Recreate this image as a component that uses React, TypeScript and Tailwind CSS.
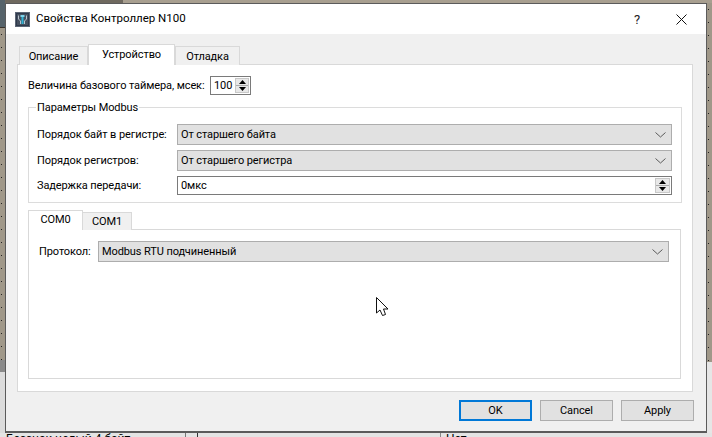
import React from "react";

const Chevron = () => (
  <svg width="11" height="6" viewBox="0 0 11 6" className="shrink-0">
    <path d="M0.5 0.5 L5.5 5 L10.5 0.5" fill="none" stroke="#5a5a5a" strokeWidth="1" />
  </svg>
);

const Combo = ({ text, className }: { text: string; className: string }) => (
  <div className={`h-[21px] flex items-center justify-between bg-[#e1e1e1] border border-[#adadad] pl-[3px] pr-[5px] ${className}`}>
    <span>{text}</span>
    <Chevron />
  </div>
);

const SpinButtons = ({ className }: { className: string }) => (
  <div className={`flex flex-col shrink-0 gap-px bg-[#ababab] border border-[#c8c8c8] ${className}`}>
    <div className="flex-1 bg-[#e8e8e8] flex items-center justify-center">
      <svg width="7" height="4" viewBox="0 0 7 4"><path d="M3.5 0 L7 4 L0 4 Z" fill="#000" /></svg>
    </div>
    <div className="flex-1 bg-[#e8e8e8] flex items-center justify-center">
      <svg width="7" height="4" viewBox="0 0 7 4"><path d="M0 0 L7 0 L3.5 4 Z" fill="#000" /></svg>
    </div>
  </div>
);

const AppIcon = () => (
  <svg width="15" height="15" viewBox="0 0 15 15" className="shrink-0">
    <rect x="0.5" y="0.5" width="14" height="14" fill="#2f3a4c" stroke="#5d6675" />
    <rect x="2" y="2" width="11" height="11" fill="#46505f" />
    <path d="M3.5 3.5 V7 L5.5 9 V12 M11.5 3.5 V7 L9.5 9 V12" fill="none" stroke="#b8c2cc" strokeWidth="1" />
    <rect x="6.5" y="3" width="2" height="9" fill="#2fb4d6" />
    <rect x="5.5" y="3" width="4" height="2" fill="#7fd3ea" />
  </svg>
);

const Button = ({ text, primary }: { text: string; primary?: boolean }) => (
  <div
    className={`w-[73px] h-[21px] flex items-center justify-center bg-[#e1e1e1] ${
      primary ? "border-2 border-[#0078d7]" : "border border-[#adadad]"
    }`}
  >
    {text}
  </div>
);

export default function App() {
  return (
    <div
      className="relative w-[712px] h-[437px] overflow-hidden flex flex-col bg-[#a09889] text-[11px] tracking-[-0.1px] leading-none text-[#000]"
      style={{ fontFamily: 'Roboto, sans-serif' }}
    >
      <div className="h-[3px] shrink-0 flex">
        <div className="w-[5px] bg-[#56636a]" />
        <div className="w-[118px] bg-[#6f695f]" />
        <div className="flex-1 bg-[#a89f90]" />
      </div>
      <div className="h-[430px] shrink-0 flex">
        <div className="w-[5px] shrink-0 flex flex-col">
          <div className="h-[25px] bg-[#56636a] border-b border-[#3a332a]" />
          <div className="h-[332px] bg-[#a09889] bg-[radial-gradient(circle,#222_0.7px,transparent_1px)] bg-[size:3px_13px] bg-repeat-y" />
          <div className="h-[12px] bg-[#8a8a8a]" />
          <div className="flex-1 bg-[#dcdcdc]" />
        </div>

        {/* Dialog window */}
        <div className="w-[702px] shrink-0 flex flex-col border border-[#5b5b5b] border-b-2 bg-[#f0f0f0]">
          <div className="h-[30px] shrink-0 bg-white flex items-center pl-[9px] pr-[19px]">
            <AppIcon />
            <span className="ml-[6px] text-[11.5px] tracking-normal">Свойства Контроллер N100</span>
            <span className="ml-auto mr-[36px] text-[13px] text-[#222]">?</span>
            <svg width="11" height="11" viewBox="0 0 11 11" className="shrink-0">
              <path d="M0.5 0.5 L10.5 10.5 M10.5 0.5 L0.5 10.5" stroke="#111" strokeWidth="1" />
            </svg>
          </div>

          <div className="flex-1 flex flex-col pl-[11px] pt-[11px]">
            {/* Main tabs */}
            <div className="h-[20px] flex items-end pl-[2px] relative z-10 -mb-px">
              <div className="w-[69px] h-[19px] flex items-center justify-center bg-[#f0f0f0] border border-b-0 border-[#d9d9d9]">Описание</div>
              <div className="w-[87px] h-[21px] pb-[2px] flex items-center justify-center bg-white border border-b-0 border-[#d9d9d9]">Устройство</div>
              <div className="w-[65px] h-[19px] flex items-center justify-center bg-[#f0f0f0] border border-b-0 border-[#d9d9d9]">Отладка</div>
            </div>

            <div className="w-[676px] h-[328px] bg-white border border-[#d9d9d9] flex flex-col pl-[10px] pt-[11px]">
              <div className="h-[19px] flex items-center">
                <span className="w-[182px] whitespace-nowrap">Величина базового таймера, мсек:</span>
                <div className="w-[41px] h-[19px] flex items-center border border-[#7a7a7a] pl-[3px] pr-px">
                  <span className="flex-1">100</span>
                  <SpinButtons className="w-[14px] h-[15px]" />
                </div>
              </div>

              {/* Modbus group */}
              <div className="relative mt-[12px] w-[654px] h-[96px] border border-[#dcdcdc] flex flex-col pl-[8px] pt-[16px]">
                <span className="absolute left-[7px] -top-[6px] bg-white px-px">Параметры Modbus</span>
                <div className="flex items-center h-[21px]">
                  <span className="w-[140px] whitespace-nowrap">Порядок байт в регистре:</span>
                  <Combo text="От старшего байта" className="w-[495px]" />
                </div>
                <div className="flex items-center h-[21px] mt-[5px]">
                  <span className="w-[140px]">Порядок регистров:</span>
                  <Combo text="От старшего регистра" className="w-[495px]" />
                </div>
                <div className="flex items-center h-[19px] mt-[5px]">
                  <span className="w-[140px]">Задержка передачи:</span>
                  <div className="w-[495px] h-[19px] flex items-center justify-between border border-[#7a7a7a] pl-[3px] pr-px">
                    <span>0мкс</span>
                    <SpinButtons className="w-[15px] h-[15px]" />
                  </div>
                </div>
              </div>

              {/* COM tabs */}
              <div className="mt-[7px] h-[20px] flex items-end relative z-10 -mb-px">
                <div className="w-[55px] h-[20px] pb-[2px] flex items-center justify-center bg-white border border-b-0 border-[#d9d9d9]">COM0</div>
                <div className="w-[49px] h-[18px] flex items-center justify-center bg-[#f0f0f0] border border-b-0 border-l-0 border-[#d9d9d9]">COM1</div>
              </div>
              <div className="w-[653px] h-[150px] bg-white border border-[#d9d9d9] flex flex-col pl-[10px] pt-[11px]">
                <div className="flex items-center h-[21px]">
                  <span className="w-[59px] whitespace-nowrap">Протокол:</span>
                  <Combo text="Modbus RTU подчиненный" className="w-[571px]" />
                </div>
              </div>
            </div>

            <div className="flex-1 flex items-start justify-end gap-[8px] pt-[8px] pr-[12px]">
              <Button text="OK" primary />
              <Button text="Cancel" />
              <Button text="Apply" />
            </div>
          </div>
        </div>

        <div className="flex-1 flex flex-col">
          <div className="h-[359px] bg-[#a09889] bg-[radial-gradient(circle,#222_0.7px,transparent_1px)] bg-[size:3px_13px] bg-repeat-y" />
          <div className="flex-1 bg-[#e6e6e6]" />
        </div>
      </div>

      {/* Table behind the dialog, bottom edge */}
      <div className="flex-1 bg-[#e4e4e4] overflow-hidden flex pl-[6px] text-[12px] tracking-normal">
        <span className="w-[180px] border-r border-[#777] whitespace-nowrap">Беззнак целый 4 байт</span>
        <span className="w-[12px] border-r border-[#333]" />
        <span className="w-[243px] border-r border-[#888]" />
        <span className="pl-[5px]">Нет</span>
      </div>

      {/* Mouse pointer */}
      <svg width="13" height="20" viewBox="0 0 13 20" className="absolute left-[376px] top-[297px]">
        <path d="M0.5 0.5 V16 L4 13 L6.5 18.5 L9.5 17.5 L7.5 12 H12 Z" fill="#fff" stroke="#111" strokeWidth="1" />
      </svg>
    </div>
  );
}
